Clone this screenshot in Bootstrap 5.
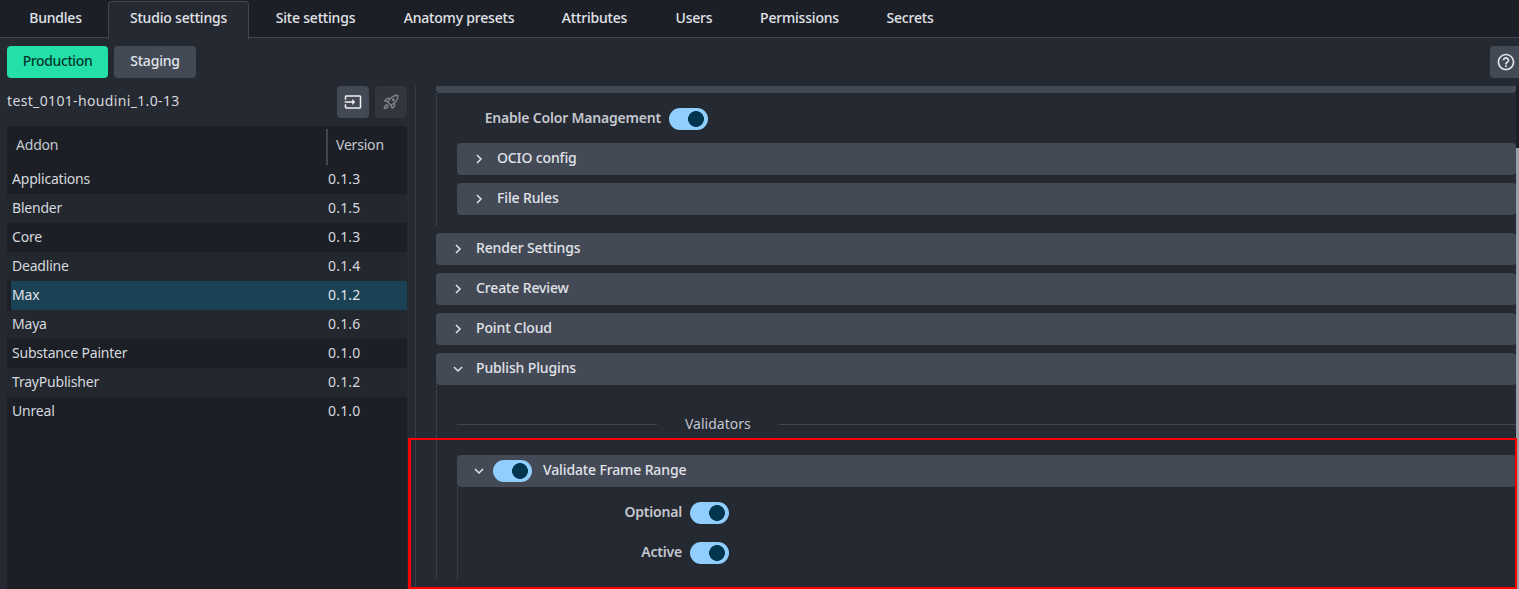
<!DOCTYPE html>
<html lang="en">
<head>
<meta charset="utf-8">
<title>Studio settings</title>
<link href="https://cdn.jsdelivr.net/npm/bootstrap@5.3.0/dist/css/bootstrap.min.css" rel="stylesheet">
<style>
html,body{height:589px;overflow:hidden}
body{background:#252931;color:#e1e3e9;font-family:"Noto Sans","Open Sans",sans-serif;font-size:14px;line-height:20px;letter-spacing:-.2px}
.app-shell{height:589px;position:relative;overflow:hidden}
.tabbar{height:38px;background:#1c2026;border-bottom:1px solid #41474f;padding:0 7px;gap:4px}
.tabitem{height:37px;padding-top:7px;text-align:center;color:#e1e3e9;font-weight:500;border:1px solid transparent;border-bottom:0;border-radius:4px 4px 0 0;flex:none}
.tabitem:nth-child(1){width:97px}
.tabitem:nth-child(2){width:141px}
.tabitem:nth-child(3){width:125px}
.tabitem:nth-child(4){width:154px}
.tabitem:nth-child(5){width:109px}
.tabitem:nth-child(6){width:82px}
.tabitem:nth-child(7){width:121px}
.tabitem:nth-child(8){width:92px}
.tabitem.on{height:38px;margin-top:1px;padding-top:6px;background:#252931;border-color:#41474f}
.toolbar{height:48px;padding:8px 0 0 7px}
.envbtn{height:32px;padding:0 0 2px;border-radius:4px;border:0;font-size:14px;color:#e1e3e9;background:#434a56;font-weight:500;letter-spacing:-.2px;width:82px}
.envbtn.on{background:#23e0a9;color:#00382a;margin-right:6px;width:101px;letter-spacing:-.4px}
.helpbtn{width:32px;height:32px;margin-right:-3px;background:#434a56;border:0;border-radius:4px;padding:0;color:#e1e3e9}
.main{height:503px}
.leftcol{width:400px;margin-left:7px;margin-right:8px}
.bundlehead{height:32px;margin-bottom:8px;gap:6px}
.bundletitle{letter-spacing:.35px;color:#d5d8de;padding-bottom:2px}
.iconbtn{width:32px;height:32px;border:0;border-radius:4px;background:#434a56;color:#f1f1f4;padding:0}
.iconbtn.off{background:#30353e;color:#7d828a}
.addons{height:463px;background:#1c2026;border-radius:4px 4px 0 0}
.addonhead{height:39px;color:#c4c7cf}
.addonhead .c1{width:319px;padding:9px 0 0 9px}
.addonhead .c2{margin-top:3px;border-left:2px solid #41474f;padding:6px 0 0 8px}
.addonrow{height:29px;line-height:27px;padding-left:5px;color:#d5d8de}
.addonrow.alt{background:#23272e}
.addonrow.sel{background:#1b4155;margin-left:4px;padding-left:1px;color:#e1e3e9}
.addonrow .nm{width:316px}
.addonrow .ver{letter-spacing:.2px}
.rightcol{border-left:1px dotted #4b515a;padding-left:20px;min-width:0}
.settings{min-width:0;overflow:hidden}
.frag{height:7px;background:#434a56;border-radius:0 0 4px 4px}
.panelhd{height:32px;background:#434a56;border-radius:4px;padding:0 0 2px 17px;color:#e1e3e9;font-weight:500;letter-spacing:-.13px}
.panelhd svg.chev{width:10px;height:10px;margin-right:13px;color:#e1e3e9;flex:none;margin-top:2px}
.panelhd svg.chev.mini{margin-right:9px}
.stack{gap:8px}
.nest{border-left:1px dotted #4b515a;padding-left:20px}
.nest.first{padding-top:15px;padding-bottom:10px;margin-bottom:8px}
.frow{height:22px;margin-bottom:18px}
.frow.last{margin-bottom:13px}
.flabel{width:232px;text-align:right;padding:0 8px 2px 0;color:#c4c7cf;font-weight:600;flex:none}
.nest.first .flabel{width:212px}
.tgl.form-check-input{width:39px;height:22px;margin:0;flex:none;border:0;border-radius:11px;background-color:#8fceff;background-image:radial-gradient(circle at 27px 11px,#00344f 7.6px,transparent 8.2px);box-shadow:none}
.panelhd .tgl.form-check-input{margin:2px 11px 0 0}
.divline{height:1px;background:#41474f}
.divline.lead{width:200px}
.divtext{color:#c4c7cf;padding:0 28px;font-weight:400;letter-spacing:0}
.sepzone{padding-top:29px;height:70px}
.subbody{border-left:1px dotted #4b515a;padding-top:15px;height:93px}
.scrolltrack{width:3px;background:#1c2026;flex:none}
.scrollthumb{margin-top:62px;height:441px;background:#9a9ea6}
.redbox{position:absolute;left:408px;top:438px;width:1109px;height:151px;border:2px solid #f00;border-left-width:3px;pointer-events:none}
</style>
</head>
<body>
<div class="app-shell">
  <div class="tabbar d-flex">
    <div class="tabitem">Bundles</div>
    <div class="tabitem on">Studio settings</div>
    <div class="tabitem">Site settings</div>
    <div class="tabitem">Anatomy presets</div>
    <div class="tabitem">Attributes</div>
    <div class="tabitem">Users</div>
    <div class="tabitem">Permissions</div>
    <div class="tabitem">Secrets</div>
  </div>
  <div class="toolbar d-flex align-items-start">
    <button class="envbtn on" type="button">Production</button>
    <button class="envbtn" type="button">Staging</button>
    <button class="helpbtn ms-auto d-flex align-items-center justify-content-center" type="button" aria-label="Help">
      <svg width="20" height="20" viewBox="0 0 24 24" fill="currentColor"><path d="M11 18h2v-2h-2v2zm1-16C6.48 2 2 6.48 2 12s4.48 10 10 10 10-4.48 10-10S17.52 2 12 2zm0 18c-4.41 0-8-3.59-8-8s3.59-8 8-8 8 3.59 8 8-3.59 8-8 8zm0-14c-2.21 0-4 1.79-4 4h2c0-1.1.9-2 2-2s2 .9 2 2c0 2-3 1.75-3 5h2c0-2.25 3-2.5 3-5 0-2.21-1.79-4-4-4z"/></svg>
    </button>
  </div>
  <div class="main d-flex">
    <div class="leftcol flex-shrink-0">
      <div class="bundlehead d-flex align-items-center">
        <span class="bundletitle flex-grow-1">test_0101-houdini_1.0-13</span>
        <button class="iconbtn d-flex align-items-center justify-content-center" type="button" aria-label="Import">
          <svg width="18" height="18" viewBox="0 0 24 24" fill="currentColor"><path d="M21 3.01H3c-1.1 0-2 .9-2 2V9h2V4.99h18v14.03H3V15H1v4.01c0 1.1.9 1.98 2 1.98h18c1.1 0 2-.88 2-1.98v-14c0-1.11-.9-2-2-2zM11 16l4-4-4-4v3H1v2h10v3z"/></svg>
        </button>
        <button class="iconbtn off d-flex align-items-center justify-content-center" type="button" aria-label="Launch">
          <svg width="18" height="18" viewBox="0 0 24 24" fill="currentColor" fill-rule="evenodd"><path d="M6 15c-.83 0-1.58.34-2.12.88C2.7 17.06 2 22 2 22s4.94-.7 6.12-1.88A2.996 2.996 0 0 0 6 15zm.71 3.71c-.28.28-2.17.76-2.17.76s.47-1.88.76-2.17c.17-.19.42-.3.7-.3a1.003 1.003 0 0 1 .71 1.71zm10.71-5.06c6.36-6.36 4.24-11.31 4.24-11.31S16.71.22 10.35 6.58l-2.49-.5a2.03 2.03 0 0 0-1.81.55L2 10.69l5 2.14L11.17 17l2.14 5 4.05-4.05c.47-.47.68-1.15.55-1.81l-.49-2.49zM7.41 10.83l-1.91-.82 1.97-1.97 1.44.29c-.57.83-1.08 1.7-1.5 2.5zm6.58 7.67l-.82-1.91c.8-.42 1.67-.93 2.49-1.5l.29 1.44-1.96 1.97zM16 12.24c-1.32 1.32-3.38 2.4-4.04 2.73l-2.93-2.93c.32-.65 1.4-2.71 2.73-4.04 4.68-4.68 8.23-3.74 8.23-3.74s.94 3.55-3.99 7.98zM15 11c1.1 0 2-.9 2-2s-.9-2-2-2-2 .9-2 2 .9 2 2 2z"/></svg>
        </button>
      </div>
      <div class="addons overflow-hidden">
        <div class="addonhead d-flex"><div class="c1">Addon</div><div class="c2">Version</div></div>
        <div class="addonrow d-flex"><span class="nm">Applications</span><span class="ver">0.1.3</span></div>
        <div class="addonrow alt d-flex"><span class="nm">Blender</span><span class="ver">0.1.5</span></div>
        <div class="addonrow d-flex"><span class="nm">Core</span><span class="ver">0.1.3</span></div>
        <div class="addonrow alt d-flex"><span class="nm">Deadline</span><span class="ver">0.1.4</span></div>
        <div class="addonrow sel d-flex"><span class="nm">Max</span><span class="ver">0.1.2</span></div>
        <div class="addonrow alt d-flex"><span class="nm">Maya</span><span class="ver">0.1.6</span></div>
        <div class="addonrow d-flex"><span class="nm">Substance Painter</span><span class="ver">0.1.0</span></div>
        <div class="addonrow alt d-flex"><span class="nm">TrayPublisher</span><span class="ver">0.1.2</span></div>
        <div class="addonrow d-flex"><span class="nm">Unreal</span><span class="ver">0.1.0</span></div>
      </div>
    </div>
    <div class="rightcol flex-grow-1 d-flex">
      <div class="settings flex-grow-1">
        <div class="frag"></div>
        <div class="nest first">
          <div class="d-flex align-items-center frow last">
            <label class="flabel">Enable Color Management</label>
            <input class="tgl form-check-input" type="checkbox" role="switch" checked aria-label="Enable Color Management">
          </div>
          <div class="d-flex flex-column stack">
            <div class="panelhd d-flex align-items-center"><svg class="chev" viewBox="0 0 10 10" fill="none" stroke="currentColor" stroke-width="1.5"><path d="M3 1l4 4-4 4"/></svg>OCIO config</div>
            <div class="panelhd d-flex align-items-center"><svg class="chev" viewBox="0 0 10 10" fill="none" stroke="currentColor" stroke-width="1.5"><path d="M3 1l4 4-4 4"/></svg>File Rules</div>
          </div>
        </div>
        <div class="d-flex flex-column stack">
          <div class="panelhd d-flex align-items-center"><svg class="chev" viewBox="0 0 10 10" fill="none" stroke="currentColor" stroke-width="1.5"><path d="M3 1l4 4-4 4"/></svg>Render Settings</div>
          <div class="panelhd d-flex align-items-center"><svg class="chev" viewBox="0 0 10 10" fill="none" stroke="currentColor" stroke-width="1.5"><path d="M3 1l4 4-4 4"/></svg>Create Review</div>
          <div class="panelhd d-flex align-items-center"><svg class="chev" viewBox="0 0 10 10" fill="none" stroke="currentColor" stroke-width="1.5"><path d="M3 1l4 4-4 4"/></svg>Point Cloud</div>
          <div class="panelhd d-flex align-items-center"><svg class="chev" viewBox="0 0 10 10" fill="none" stroke="currentColor" stroke-width="1.5"><path d="M1 3l4 4 4-4"/></svg>Publish Plugins</div>
        </div>
        <div class="nest">
          <div class="sepzone">
            <div class="d-flex align-items-center">
              <div class="divline lead"></div>
              <div class="divtext">Validators</div>
              <div class="divline flex-grow-1"></div>
            </div>
          </div>
          <div class="panelhd d-flex align-items-center">
            <svg class="chev mini" viewBox="0 0 10 10" fill="none" stroke="currentColor" stroke-width="1.5"><path d="M1 3l4 4 4-4"/></svg>
            <input class="tgl form-check-input" type="checkbox" role="switch" checked aria-label="Validate Frame Range">
            <span>Validate Frame Range</span>
          </div>
          <div class="subbody">
            <div class="d-flex align-items-center frow">
              <label class="flabel">Optional</label>
              <input class="tgl form-check-input" type="checkbox" role="switch" checked aria-label="Optional">
            </div>
            <div class="d-flex align-items-center frow">
              <label class="flabel">Active</label>
              <input class="tgl form-check-input" type="checkbox" role="switch" checked aria-label="Active">
            </div>
          </div>
        </div>
      </div>
      <div class="scrolltrack"><div class="scrollthumb"></div></div>
    </div>
  </div>
  <div class="redbox"></div>
</div>
<script src="https://cdn.jsdelivr.net/npm/bootstrap@5.3.0/dist/js/bootstrap.bundle.min.js"></script>
</body>
</html>
